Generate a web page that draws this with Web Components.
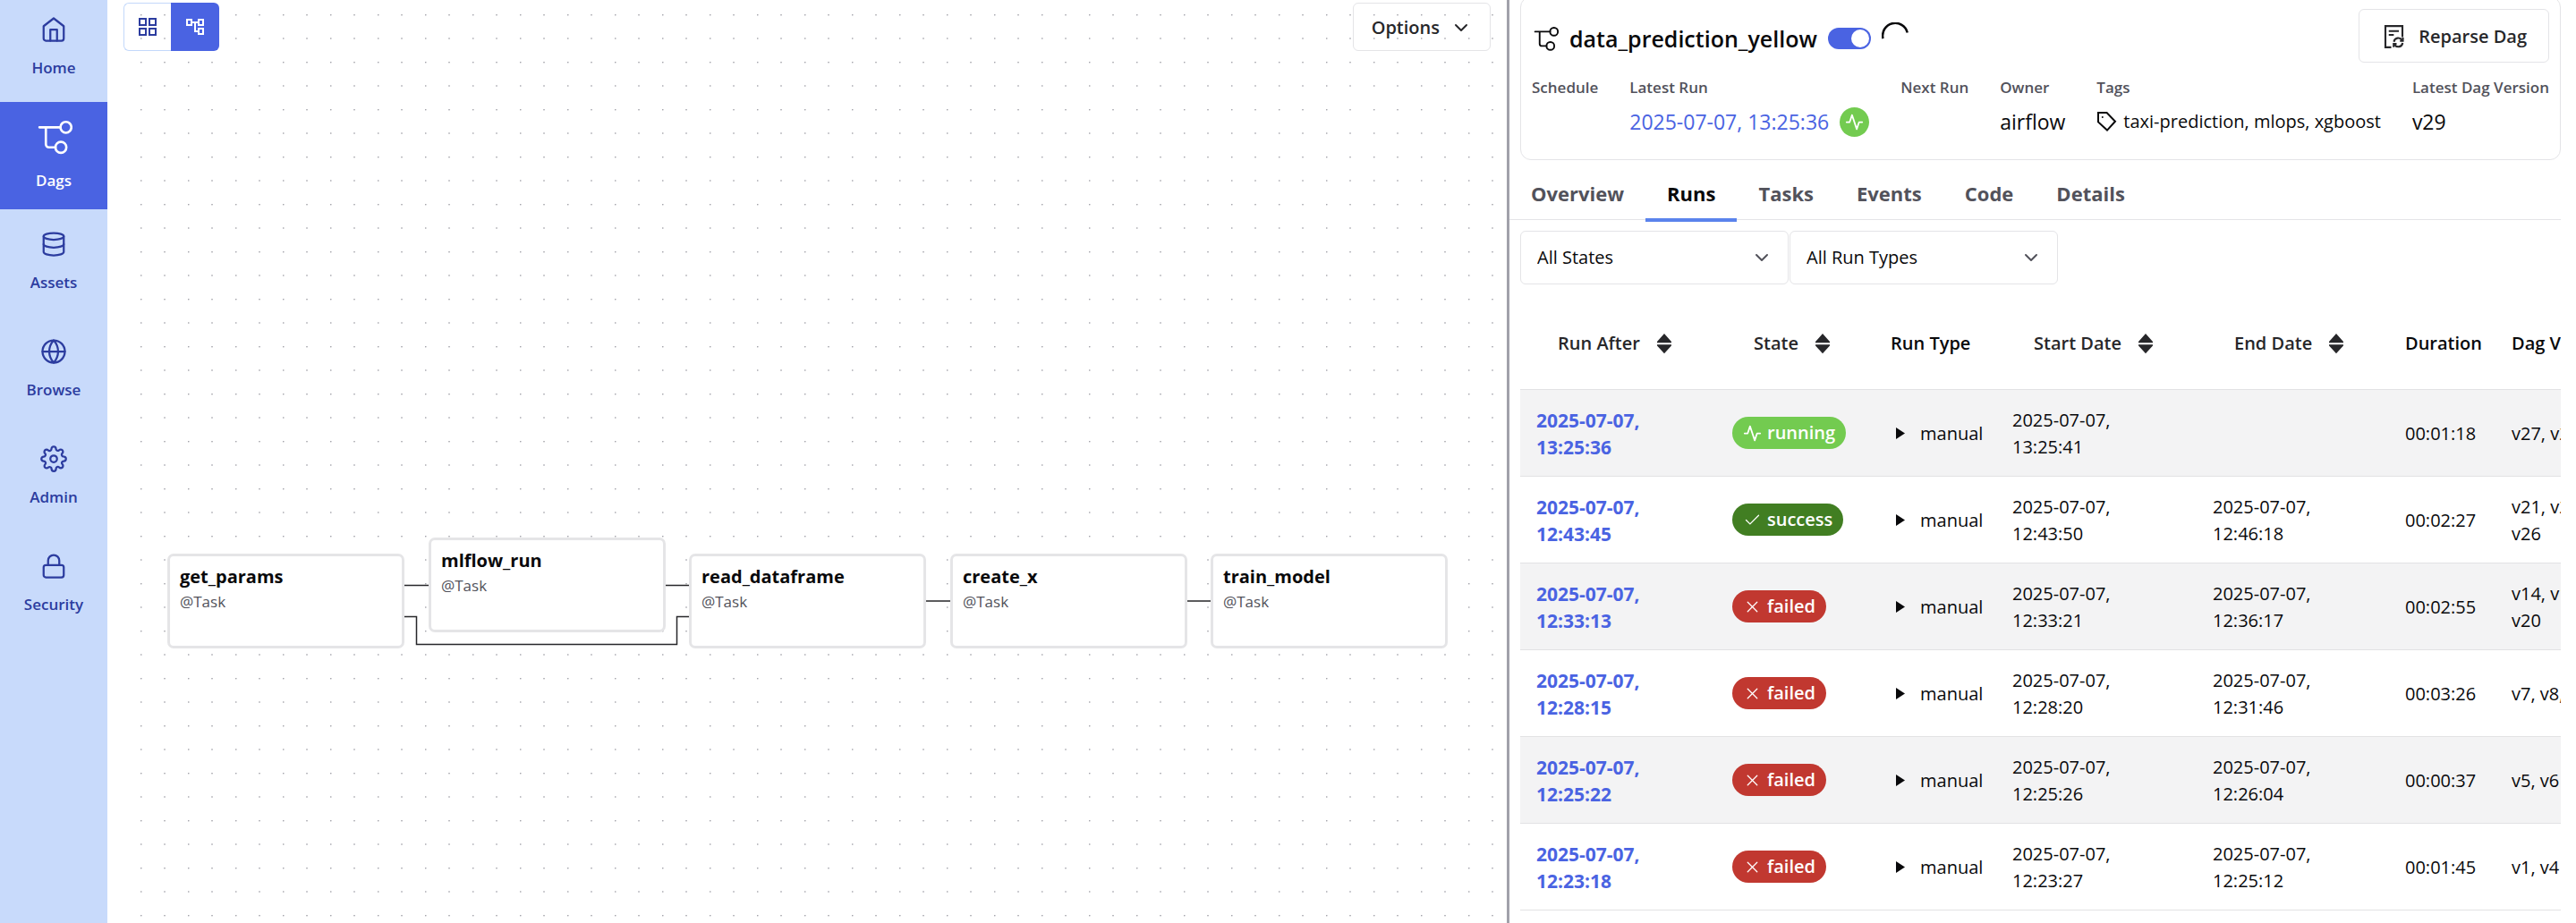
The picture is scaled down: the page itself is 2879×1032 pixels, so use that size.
<!DOCTYPE html>
<html lang="en">
<head>
<meta charset="utf-8">
<meta name="viewport" content="width=device-width, initial-scale=1">
<title>data_prediction_yellow - Airflow</title>
<style>
  :root {
    --brand: #4a63e2;
    --brand-dark: #2c3c9f;
    --brand-light: #c8dafb;
    --text: #09090b;
    --text-soft: #27272a;
    --text-muted: #52525b;
    --border: #e4e4e7;
  }

  body {
    margin: 0;
    font-family: "Open Sans", "Noto Sans", sans-serif;
    font-size: 20px;
    line-height: 30px;
    color: var(--text);
    background: #fff;
    overflow: hidden;
  }
</style>
</head>
<body>
<dag-page></dag-page>

<script>
const define = (name, render) => {
  customElements.define(name, class extends HTMLElement {
    constructor() {
      super();
      this.attachShadow({ mode: 'open' });
    }

    connectedCallback() {
      this.shadowRoot.innerHTML = render(this);
    }
  });
};

const ICONS = {
  home: '<path d="M3 9l9-7 9 7v11a2 2 0 0 1-2 2H5a2 2 0 0 1-2-2z"/><path d="M9 22V12h6v10"/>',
  dag: '<path d="M2.9 5.9H16.4M7 5.9v10.8a2 2 0 0 0 2 2h4.2"/><circle cx="19.8" cy="5.9" r="3.5"/><circle cx="16.6" cy="18.7" r="3.5"/>',
  database: '<ellipse cx="12" cy="5" rx="9" ry="3"/><path d="M21 12c0 1.66-4 3-9 3s-9-1.34-9-3"/><path d="M3 5v14c0 1.66 4 3 9 3s9-1.34 9-3V5"/>',
  globe: '<circle cx="12" cy="12" r="10"/><path d="M2 12h20"/><path d="M12 2a15.3 15.3 0 0 1 4 10 15.3 15.3 0 0 1-4 10 15.3 15.3 0 0 1-4-10 15.3 15.3 0 0 1 4-10z"/>',
  settings: '<circle cx="12" cy="12" r="3"/><path d="M19.4 15a1.65 1.65 0 0 0 .33 1.82l.06.06a2 2 0 0 1 0 2.83 2 2 0 0 1-2.83 0l-.06-.06a1.65 1.65 0 0 0-1.82-.33 1.65 1.65 0 0 0-1 1.51V21a2 2 0 0 1-2 2 2 2 0 0 1-2-2v-.09A1.65 1.65 0 0 0 9 19.4a1.65 1.65 0 0 0-1.82.33l-.06.06a2 2 0 0 1-2.83 0 2 2 0 0 1 0-2.83l.06-.06a1.65 1.65 0 0 0 .33-1.82 1.65 1.65 0 0 0-1.51-1H3a2 2 0 0 1-2-2 2 2 0 0 1 2-2h.09A1.65 1.65 0 0 0 4.6 9a1.65 1.65 0 0 0-.33-1.82l-.06-.06a2 2 0 0 1 0-2.83 2 2 0 0 1 2.83 0l.06.06a1.65 1.65 0 0 0 1.82.33H9a1.65 1.65 0 0 0 1-1.51V3a2 2 0 0 1 2-2 2 2 0 0 1 2 2v.09a1.65 1.65 0 0 0 1 1.51 1.65 1.65 0 0 0 1.82-.33l.06-.06a2 2 0 0 1 2.83 0 2 2 0 0 1 0 2.83l-.06.06a1.65 1.65 0 0 0-.33 1.82V9a1.65 1.65 0 0 0 1.51 1H21a2 2 0 0 1 2 2 2 2 0 0 1-2 2h-.09a1.65 1.65 0 0 0-1.51 1z"/>',
  lock: '<rect x="3" y="11" width="18" height="11" rx="2"/><path d="M7 11V7a5 5 0 0 1 10 0v4"/>',
  grid: '<g stroke-width="2" stroke-linecap="butt" stroke-linejoin="miter"><rect x="3" y="3" width="7" height="7"/><rect x="14" y="3" width="7" height="7"/><rect x="14" y="14" width="7" height="7"/><rect x="3" y="14" width="7" height="7"/></g>',
  tree: '<path fill="currentColor" stroke="none" d="M22 11V3h-7v3H9V3H2v8h7V8h2v10h4v3h7v-8h-7v3h-2V8h2v3h7zM7 9H4V5h3v4zm10 6h3v4h-3v-4zm0-10h3v4h-3V5z"/>',
  chevron: '<path stroke-width="2" d="M6 9l6 6 6-6"/>',
  activity: '<path stroke-width="2" d="M22 12h-4l-3 9L9 3l-3 9H2"/>',
  check: '<path d="M20 6L9 17l-5-5"/>',
  cross: '<path d="M18 6L6 18M6 6l12 12"/>',
  tag: '<path stroke-width="2" stroke-linejoin="miter" d="M2 2h9.6l9.4 9.8-9 9.8L2 12.4z"/><circle cx="6.8" cy="7" r="1" fill="currentColor" stroke="none"/>',
  sort: '<path fill="currentColor" stroke="none" d="M12 3.200l6.400 7.200v.9H5.600v-.9zM5.600 13h12.800v.9L12 21l-6.400-7.100z"/>',
  triangle: '<path fill="currentColor" stroke="none" d="M6 5l10 6.500L6 18z"/>',
  reparse: '<g stroke-linecap="butt" stroke-linejoin="miter"><path d="M9.200 21.500H4V2.500h15.200v9.800M7 7h9M7 10.400h4.500"/><path d="M11.600 16.600a3.900 3.900 0 0 1 7.200-1.500M19.400 17.600a3.900 3.900 0 0 1-7.200 1.500"/><path d="M19.600 12.800v3h-2.600M11.400 21.400v-3H14"/></g>',
  spinner: '<path stroke-linecap="butt" d="M1.200 14.500A11 11 0 0 1 23 9.200"/>'
};

define('ui-icon', el => {
  const size = el.getAttribute('size') || 24;
  const weight = el.getAttribute('weight') || 2;
  return `
    <style>
      :host { display: inline-flex; flex: none; }
      svg { display: block; }
    </style>
    <svg width="${size}" height="${size}" viewBox="0 0 24 24" fill="none" stroke="currentColor"
      stroke-width="${weight}" stroke-linecap="round" stroke-linejoin="round" aria-hidden="true">
      ${ICONS[el.getAttribute('name')]}
    </svg>
  `;
});

define('nav-item', el => `
  <style>
    :host { display: block; }
    a {
      display: flex;
      flex-direction: column;
      align-items: center;
      justify-content: center;
      gap: 15px;
      box-sizing: border-box;
      height: 120px;
      padding-bottom: 2px;
      font-size: 17px;
      line-height: 26px;
      font-weight: 600;
      text-decoration: none;
      color: var(--brand-dark);
    }
    :host([active]) a {
      background: var(--brand);
      color: #fff;
    }
  </style>
  <a href="#">
    <ui-icon name="${el.getAttribute('icon')}" size="${el.hasAttribute('active') ? 42 : 30}"
      weight="${el.hasAttribute('active') ? '1.5' : '1.8'}"></ui-icon>
    <slot></slot>
  </a>
`);

define('side-nav', () => `
  <style>
    :host {
      display: block;
      width: 120px;
      flex: none;
      overflow: hidden;
      background: var(--brand-light);
    }
    /* the list is scrolled a little past its top */
    nav { margin-top: -6px; }
  </style>
  <nav>
    <nav-item icon="home">Home</nav-item>
    <nav-item icon="dag" active>Dags</nav-item>
    <nav-item icon="database">Assets</nav-item>
    <nav-item icon="globe">Browse</nav-item>
    <nav-item icon="settings">Admin</nav-item>
    <nav-item icon="lock">Security</nav-item>
  </nav>
`);

define('task-node', el => `
  <style>
    :host {
      position: absolute;
      box-sizing: border-box;
      width: 265px;
      height: 106px;
      padding: 8px 11px;
      border: 3px solid #e5e5e7;
      border-radius: 7px;
      background: #fff;
    }
    b { display: block; }
    span {
      display: block;
      font-size: 17px;
      line-height: 26px;
      color: var(--text-muted);
    }
  </style>
  <b>${el.getAttribute('name')}</b>
  <span>@Task</span>
`);

define('dag-graph', () => `
  <style>
    :host {
      display: block;
      position: relative;
      flex: 1564 1 0;
      min-width: 0;
      overflow: hidden;
    }
    .dots {
      position: absolute;
      inset: 0 12px;
      width: calc(100% - 24px);
      height: 100%;
    }
    .toolbar {
      position: relative;
      display: flex;
      justify-content: space-between;
      padding: 3px 18px;
    }
    button {
      display: flex;
      align-items: center;
      justify-content: center;
      box-sizing: border-box;
      height: 54px;
      margin: 0;
      font: inherit;
      font-weight: 600;
      background: none;
      border: 1px solid var(--border);
      border-radius: 6px;
    }
    .views { display: flex; }
    .views button {
      width: 53px;
      padding: 0;
      color: var(--brand-dark);
      border-color: #c3d8fa;
      border-right: 0;
      border-radius: 6px 0 0 6px;
    }
    .views button + button {
      width: 54px;
      border: 0;
      border-radius: 0 6px 6px 0;
      color: #fff;
      background: var(--brand);
    }
    .options {
      gap: 12px;
      padding: 2px 20px 0;
      color: var(--text-soft);
    }
    .flow {
      position: relative;
      width: 1430px;
      margin: 541px auto 0;
      height: 124px;
    }
    .edges {
      position: absolute;
      inset: 0;
      width: 100%;
      height: 100%;
    }
  </style>
  <svg class="dots" aria-hidden="true">
    <pattern id="dots" x="25" y="16" width="53" height="53" patternUnits="userSpaceOnUse">
      <g fill="#8f8f98">
        <circle cx="0.8" cy="0.8" r="0.8"/>
        <circle cx="27" cy="0.8" r="0.8"/>
        <circle cx="0.8" cy="27" r="0.8"/>
        <circle cx="27" cy="27" r="0.8"/>
      </g>
    </pattern>
    <rect width="100%" height="100%" fill="url(#dots)"/>
  </svg>
  <div class="toolbar">
    <div class="views">
      <button aria-label="Grid view"><ui-icon name="grid"></ui-icon></button>
      <button aria-label="Graph view"><ui-icon name="tree"></ui-icon></button>
    </div>
    <button class="options">Options <ui-icon name="chevron"></ui-icon></button>
  </div>
  <div class="flow">
    <svg class="edges" fill="none" stroke="#27272a" stroke-width="1.5" aria-hidden="true">
      <path d="M264 53.5H293M556 53.5H584M264 88.5H278.5V119.5H569.5V88.5H584M847 71H876M1139 71H1167"/>
    </svg>
    <task-node name="get_params" style="left: 0; top: 18px"></task-node>
    <task-node name="mlflow_run" style="left: 292px; top: 0"></task-node>
    <task-node name="read_dataframe" style="left: 583px; top: 18px"></task-node>
    <task-node name="create_x" style="left: 875px; top: 18px"></task-node>
    <task-node name="train_model" style="left: 1166px; top: 18px"></task-node>
  </div>
`);

define('dag-stat', el => `
  <style>
    :host { display: block; flex: none; }
    .label {
      font-size: 17px;
      line-height: 26px;
      font-weight: 600;
      color: var(--text-muted);
      margin-bottom: 7px;
    }
    .value {
      display: flex;
      align-items: center;
      min-height: 36px;
      font-size: 23px;
    }
  </style>
  <div class="label">${el.getAttribute('label')}</div>
  <div class="value"><slot></slot></div>
`);

define('dag-header', () => `
  <style>
    :host {
      display: block;
      box-sizing: border-box;
      margin: -4px 17px 0 12px;
      padding: 13px 12px 24px;
      border: 1px solid var(--border);
      border-radius: 12px;
    }
    .top {
      display: flex;
      align-items: center;
      justify-content: space-between;
      height: 60px;
    }
    .title {
      display: flex;
      align-items: center;
      gap: 12px;
      padding-top: 6px;
    }
    .title ui-icon:last-child { align-self: flex-start; }
    h1 {
      margin: 0;
      font-size: 25px;
      line-height: 36px;
      font-weight: 600;
    }
    input {
      appearance: none;
      width: 48px;
      height: 24px;
      margin: 0;
      padding: 2px;
      box-sizing: border-box;
      border-radius: 12px;
      background: var(--brand);
    }
    input::before {
      content: '';
      display: block;
      width: 20px;
      height: 20px;
      margin-left: auto;
      border-radius: 50%;
      background: #fff;
    }
    .top button {
      display: flex;
      align-items: center;
      gap: 12px;
      height: 60px;
      padding: 2px 24px 0;
      font: inherit;
      font-weight: 600;
      color: var(--text-soft);
      background: none;
      border: 1px solid var(--border);
      border-radius: 6px;
    }
    .stats {
      display: flex;
      justify-content: space-between;
      padding-top: 15px;
    }
    .stats a {
      color: var(--brand);
      text-decoration: none;
    }
    .running {
      display: flex;
      align-items: center;
      justify-content: center;
      width: 33px;
      height: 33px;
      margin-left: 12px;
      border-radius: 50%;
      color: #fff;
      background: #73cb50;
    }
    .tags {
      display: flex;
      align-items: center;
      gap: 6px;
      font-size: 20px;
    }
  </style>
  <div class="top">
    <div class="title">
      <ui-icon name="dag" size="30" weight="1.5"></ui-icon>
      <h1>data_prediction_yellow</h1>
      <input type="checkbox" role="switch" aria-label="Pause Dag" checked>
      <ui-icon name="spinner" size="30" weight="2"></ui-icon>
    </div>
    <button><ui-icon name="reparse" size="30" weight="1.7"></ui-icon> Reparse Dag</button>
  </div>
  <div class="stats">
    <dag-stat label="Schedule"></dag-stat>
    <dag-stat label="Latest Run">
      <a href="#">2025-07-07, 13:25:36</a>
      <span class="running"><ui-icon name="activity" size="21"></ui-icon></span>
    </dag-stat>
    <dag-stat label="Next Run"></dag-stat>
    <dag-stat label="Owner">airflow</dag-stat>
    <dag-stat label="Tags">
      <span class="tags"><ui-icon name="tag"></ui-icon>taxi-prediction, mlops, xgboost</span>
    </dag-stat>
    <dag-stat label="Latest Dag Version">v29</dag-stat>
  </div>
`);

define('dag-tabs', () => `
  <style>
    :host {
      display: block;
      margin: 12px 17px 0 0;
    }
    nav {
      display: flex;
      height: 54px;
      border-bottom: 1px solid var(--border);
    }
    a {
      box-sizing: border-box;
      height: 57px;
      padding: 10px 24px 0;
      font-size: 22px;
      font-weight: 700;
      color: var(--text-muted);
      text-decoration: none;
    }
    a[aria-current] {
      color: var(--text);
      border-bottom: 4px solid #5a83ec;
    }
  </style>
  <nav>
    <a href="#">Overview</a>
    <a href="#" aria-current="page">Runs</a>
    <a href="#">Tasks</a>
    <a href="#">Events</a>
    <a href="#">Code</a>
    <a href="#">Details</a>
  </nav>
`);

define('filter-select', el => `
  <style>
    :host {
      display: grid;
      width: 300px;
      align-items: center;
    }
    select, ui-icon { grid-area: 1 / 1; }
    select {
      appearance: none;
      width: 100%;
      height: 60px;
      padding: 0 48px 0 18px;
      font: inherit;
      color: var(--text);
      background: #fff;
      border: 1px solid var(--border);
      border-radius: 6px;
    }
    ui-icon {
      justify-self: end;
      margin-right: 18px;
      color: var(--text-muted);
      pointer-events: none;
    }
  </style>
  <select aria-label="${el.getAttribute('label')}">
    <option>${el.getAttribute('label')}</option>
  </select>
  <ui-icon name="chevron"></ui-icon>
`);

define('state-badge', el => {
  const state = el.getAttribute('state');
  const icons = { running: 'activity', success: 'check', failed: 'cross' };
  const colors = { running: '#73cb50', success: '#417e22', failed: '#c13830' };
  return `
    <style>
      :host {
        display: inline-flex;
        align-items: center;
        gap: 6px;
        height: 36px;
        padding: 0 12px;
        vertical-align: middle;
        border-radius: 18px;
        font-weight: 600;
        color: #fff;
        background: ${colors[state]};
      }
    </style>
    <ui-icon name="${icons[state]}" size="21" weight="1.5"></ui-icon>${state}
  `;
});

const RUNS = [
  { after: '13:25:36', state: 'running', start: '13:25:41', end: '', duration: '00:01:18', versions: 'v27, v28' },
  { after: '12:43:45', state: 'success', start: '12:43:50', end: '12:46:18', duration: '00:02:27', versions: 'v21, v22,<br>v26' },
  { after: '12:33:13', state: 'failed', start: '12:33:21', end: '12:36:17', duration: '00:02:55', versions: 'v14, v15,<br>v20' },
  { after: '12:28:15', state: 'failed', start: '12:28:20', end: '12:31:46', duration: '00:03:26', versions: 'v7, v8, v9' },
  { after: '12:25:22', state: 'failed', start: '12:25:26', end: '12:26:04', duration: '00:00:37', versions: 'v5, v6' },
  { after: '12:23:18', state: 'failed', start: '12:23:27', end: '12:25:12', duration: '00:01:45', versions: 'v1, v4' }
];

const date = time => time ? `2025-07-07,<br>${time}` : '';
const sortable = label => `<button>${label} <ui-icon name="sort" size="30"></ui-icon></button>`;

define('runs-table', () => `
  <style>
    :host {
      display: block;
      overflow: hidden;
      margin: 0 17px 0 12px;
    }
    table {
      width: 1260px;
      table-layout: fixed;
      border-collapse: separate;
      border-spacing: 0;
    }
    th, td {
      box-sizing: border-box;
      padding: 19px 18px 17px;
      text-align: left;
      white-space: nowrap;
      border-bottom: 1px solid #e2e2e4;
    }
    th {
      height: 118px;
      padding-top: 31px;
      font-weight: 600;
    }
    td { height: 97px; }
    tbody tr:nth-child(odd) { background: #f3f3f4; }
    th button {
      display: flex;
      align-items: center;
      gap: 12px;
      padding: 0 24px;
      font: inherit;
      color: var(--text-soft);
      background: none;
      border: 0;
    }
    td a {
      display: block;
      font-size: 21px;
      font-weight: 700;
      color: var(--brand);
      text-decoration: none;
    }
    state-badge { margin-top: -2px; }
    .type {
      display: flex;
      align-items: center;
      gap: 9px;
    }
  </style>
  <table>
    <colgroup>
      <col style="width: 219px"><col style="width: 177px"><col style="width: 136px">
      <col style="width: 224px"><col style="width: 215px"><col style="width: 119px"><col>
    </colgroup>
    <thead>
      <tr>
        <th>${sortable('Run After')}</th>
        <th>${sortable('State')}</th>
        <th>Run Type</th>
        <th>${sortable('Start Date')}</th>
        <th>${sortable('End Date')}</th>
        <th>Duration</th>
        <th>Dag Versions</th>
      </tr>
    </thead>
    <tbody>
      ${RUNS.map(run => `
        <tr>
          <td><a href="#">${date(run.after)}</a></td>
          <td><state-badge state="${run.state}"></state-badge></td>
          <td><div class="type"><ui-icon name="triangle" size="24"></ui-icon>manual</div></td>
          <td>${date(run.start)}</td>
          <td>${date(run.end)}</td>
          <td>${run.duration}</td>
          <td>${run.versions}</td>
        </tr>
      `).join('')}
    </tbody>
  </table>
`);

define('dag-page', () => `
  <style>
    :host {
      display: flex;
      height: 100vh;
    }
    .divider {
      flex: none;
      width: 3px;
      background: #a1a1aa;
    }
    main {
      flex: 1192 1 0;
      min-width: 0;
      overflow: hidden;
      display: flow-root;
    }
    .filters {
      display: flex;
      gap: 1px;
      padding: 12px 12px 0;
    }
  </style>
  <side-nav></side-nav>
  <dag-graph></dag-graph>
  <div class="divider"></div>
  <main>
    <dag-header></dag-header>
    <dag-tabs></dag-tabs>
    <div class="filters">
      <filter-select label="All States"></filter-select>
      <filter-select label="All Run Types"></filter-select>
    </div>
    <runs-table></runs-table>
  </main>
`);
</script>
</body>
</html>
